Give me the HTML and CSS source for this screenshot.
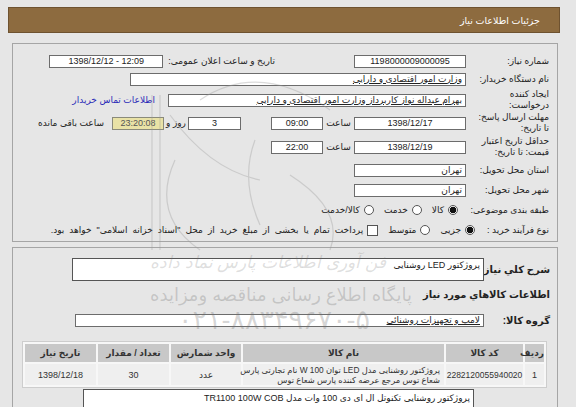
FILE: index.html
```html
<!DOCTYPE html>
<html dir="rtl" lang="fa">
<head>
<meta charset="utf-8">
<link rel="stylesheet" href="styles.css">
</head>
<body>
<div class="page">
  <div class="titlebar">جزئیات اطلاعات نیاز</div>

  <div class="panel p1">
    <div class="row h18">
      <div class="lbl">شماره نیاز:</div>
      <div class="fld w112 c ltr">1198000009000095</div>
      <div class="lbl2">تاریخ و ساعت اعلان عمومی:</div>
      <div class="fld w114 c ltr">1398/12/12 - 12:09</div>
    </div>
    <div class="row h18">
      <div class="lbl">نام دستگاه خریدار:</div>
      <div class="fld w336"><span class="u">وزارت امور اقتصادی و دارایی</span></div>
    </div>
    <div class="row h24">
      <div class="lbl">ایجاد کننده<br>درخواست:</div>
      <div class="fld w298"><span class="u">بهرام عبداله نواز کاربرداز وزارت امور اقتصادی و دارایی</span></div>
      <a class="link">اطلاعات تماس خریدار</a>
    </div>
    <div class="row h22">
      <div class="lbl">مهلت ارسال پاسخ:<br>تا تاریخ:</div>
      <div class="fld w112 c ltr">1398/12/17</div>
      <div class="word w31">ساعت</div>
      <div class="fld w52 c ltr">09:00</div>
      <div class="fld w53 c ltr gap30">3</div>
      <div class="word w24">روز و</div>
      <div class="fld w52 c ltr khaki">23:20:08</div>
      <div class="word gap8">ساعت باقی مانده</div>
    </div>
    <div class="row h26">
      <div class="lbl">حداقل تاریخ اعتبار<br>قیمت: تا تاریخ:</div>
      <div class="fld w112 c ltr">1398/12/19</div>
      <div class="word w31">ساعت</div>
      <div class="fld w52 c ltr">22:00</div>
    </div>
    <div class="row h20">
      <div class="lbl">استان محل تحویل:</div>
      <div class="fld w112">تهران</div>
    </div>
    <div class="row h20">
      <div class="lbl">شهر محل تحویل:</div>
      <div class="fld w112">تهران</div>
    </div>
    <div class="row h20">
      <div class="lbl nowrap">طبقه بندی موضوعی:</div>
      <div class="opts first8">
        <span class="opt"><span class="radio on"></span>کالا</span>
        <span class="opt"><span class="radio"></span>خدمت</span>
        <span class="opt"><span class="radio"></span>کالا/خدمت</span>
      </div>
    </div>
    <div class="row h20">
      <div class="lbl lbl-short nowrap">نوع فرآیند خرید :</div>
      <div class="opts">
        <span class="opt"><span class="radio on"></span>جزیی</span>
        <span class="opt"><span class="radio"></span>متوسط</span>
        <span class="opt wide"><span class="check"></span>پرداخت تمام یا بخشی از مبلغ خرید از محل "اسناد خزانه اسلامی" خواهد بود.</span>
      </div>
    </div>
  </div>

  <div class="panel p2">
    <div class="row2 desc-row">
      <div class="blbl">شرح کلي نياز:</div>
      <div class="box w412">پروژکتور LED روشنایی</div>
    </div>
    <div class="sect">اطلاعات کالاهاي مورد نياز</div>
    <div class="row2 grp-row">
      <div class="blbl">گروه کالا:</div>
      <div class="fld w409"><span class="u">لامپ و تجهیزات روشنائی</span></div>
    </div>
    <table class="tbl">
      <colgroup>
        <col class="c1"><col class="c2"><col class="c3"><col class="c4"><col class="c5"><col class="c6">
      </colgroup>
      <thead>
        <tr><th>ردیف</th><th>کد کالا</th><th>نام کالا</th><th>واحد شمارش</th><th>تعداد / مقدار</th><th>تاریخ نیاز</th></tr>
      </thead>
      <tbody>
        <tr>
          <td>1</td>
          <td class="code">2282120055940020</td>
          <td class="name">پروژکتور روشنایی مدل LED توان 100 W نام تجارتی پارس<br>شعاع توس مرجع عرضه کننده پارس شعاع توس</td>
          <td>عدد</td>
          <td>30</td>
          <td>1398/12/18</td>
        </tr>
      </tbody>
    </table>
    <div class="box w391 note">پروژکتور روشنایی تکنوتل ال ای دی 100 وات مدل TR1100 100W COB</div>
  </div>
</div>

<div class="wm" aria-hidden="true">
  <svg class="wm-logo" width="576" height="407" viewBox="0 0 576 407">
    <g fill="none" stroke="#9a9a9a" stroke-width="1.2">
      <path d="M152 95 L152 250"/>
      <path d="M160 95 L160 250"/>
      <path d="M200 100 Q 260 60 330 110"/>
      <path d="M175 160 Q 150 215 200 250"/>
      <path d="M255 140 Q 240 180 260 225"/>
      <path d="M290 175 Q 345 210 330 250"/>
      <path d="M170 115 Q 210 170 260 180"/>
    </g>
  </svg>
  <div class="wm-fa1">فن آوری اطلاعات پارس نماد داده</div>
  <div class="wm-fa2">پایگاه اطلاع رسانی مناقصه ومزایده</div>
  <div class="wm-tel">۰۲۱-۸۸۳۴۹۶۷۰-۵</div>
</div>
</body>
</html>
```

FILE: styles.css
```css
* { box-sizing: border-box; }
html, body { margin: 0; padding: 0; }
body {
  background: #e6e6e6;
  font-family: "Liberation Sans", "DejaVu Sans", sans-serif;
  font-size: 9px;
  color: #222;
  width: 576px;
  height: 407px;
  overflow: hidden;
  position: relative;
}
.page { padding: 7px 16px 0 8px; height: 407px; overflow: hidden; }
.ltr { direction: ltr; }
.nowrap { white-space: nowrap; }

.titlebar {
  height: 26px;
  background: #8d6b3f;
  border: 1px solid #6e5230;
  color: #fff;
  display: flex;
  align-items: center;
  padding-right: 19px;
  font-size: 9.5px;
}

.panel {
  margin: 10px 2px 0 4px;
  border: 1px solid #a5a5a5;
}
.p1 { padding: 8px 0 1px; }
.p2 { margin-top: 5px; border-bottom: none; }

.row { display: flex; align-items: center; }
.h18 { height: 18px; }
.h20 { height: 20px; }
.h22 { height: 22px; }
.h24 { height: 24px; }
.h26 { height: 26px; }

.lbl {
  width: 91px;
  flex: 0 0 91px;
  padding-right: 8px;
  line-height: 11px;
  color: #222;
}
.lbl-short { width: 82px; flex-basis: 82px; }
.lbl2 {
  margin-right: 79px;
  margin-left: 5px;
  white-space: nowrap;
}

.fld {
  height: 13px;
  background: #fff;
  border: 1px solid #6c6c6c;
  display: flex;
  align-items: center;
  padding: 0 3px;
  white-space: nowrap;
  overflow: hidden;
  line-height: 11px;
  flex: 0 0 auto;
}
.c { justify-content: center; }
.u { text-decoration: underline; }
.w52 { width: 52px; }
.w53 { width: 53px; }
.w112 { width: 112px; }
.w114 { width: 114px; }
.w298 { width: 298px; }
.w336 { width: 336px; }
.w409 { width: 409px; }
.khaki { background: #e9e2a6; color: #555; border-color: #8a8a7a; }

.word { text-align: center; white-space: nowrap; }
.w31 { width: 31px; }
.w24 { width: 24px; }
.gap30 { margin-right: 30px; }
.gap8 { margin-right: 8px; }

.link { color: #2b2bb8; margin-right: 13px; white-space: nowrap; }

.opts { display: flex; align-items: center; }
.first8 { margin-right: 8px; }
.opt {
  display: flex;
  align-items: center;
  gap: 4px;
  margin-left: 10px;
  white-space: nowrap;
}
.opt.wide { word-spacing: 2.5px; }
.radio {
  width: 10px;
  height: 10px;
  border-radius: 50%;
  border: 1px solid #555;
  background: #fff;
  flex: 0 0 10px;
}
.radio.on { background: radial-gradient(circle, #111 0 3px, #fff 3.6px); }
.check {
  width: 11px;
  height: 11px;
  border: 1px solid #555;
  background: #fff;
  flex: 0 0 11px;
}

.row2 { display: flex; align-items: center; }
.blbl {
  width: 73px;
  flex: 0 0 73px;
  padding-right: 7px;
  font-weight: bold;
  font-size: 10px;
  white-space: nowrap;
}
.desc-row { margin-top: 10px; }
.box {
  background: #fff;
  border: 1px solid #555;
  padding: 1px 3px;
  line-height: 11px;
}
.w412 { width: 412px; height: 23px; }
.sect {
  margin-top: 8px;
  padding-right: 7px;
  font-weight: bold;
  font-size: 10px;
  line-height: 12px;
}
.grp-row { margin-top: 13px; }

.tbl {
  margin: 14px 10px 0 9px;
  width: 525px;
  table-layout: fixed;
  border-collapse: separate;
  border-spacing: 2px;
  background: #f7f7f7;
  border: 1px solid #cdcdcd;
  font-size: 9px;
}
.c1 { width: 19px; }
.c2 { width: 77px; }
.c3 { width: 201px; }
.c4 { width: 70px; }
.c5 { width: 71px; }
.c6 { width: 71px; }
.tbl th {
  background: #c8c8c8;
  height: 18px;
  padding: 0;
  font-weight: bold;
  color: #333;
}
.tbl td {
  background: #efefef;
  height: 21px;
  padding: 0 2px;
  text-align: center;
  line-height: 10px;
  color: #333;
}
.tbl td.code { padding: 0; font-size: 8.5px; white-space: nowrap; }
.tbl td.name {
  text-align: right;
  padding-right: 4px;
  padding-left: 1px;
  white-space: nowrap;
  font-size: 8.3px;
}

.w391 { width: 391px; height: 18px; border-bottom: none; }
.note { margin: 1px 83px 0 0; padding-top: 3px; }

.wm {
  position: absolute;
  inset: 0;
  pointer-events: none;
}
.wm-logo { position: absolute; left: 0; top: 0; opacity: 0.35; }
.wm-fa1 {
  position: absolute;
  left: 150px;
  top: 252px;
  font-size: 17px;
  font-style: italic;
  color: rgba(110, 110, 110, 0.22);
  white-space: nowrap;
}
.wm-fa2 {
  position: absolute;
  left: 150px;
  top: 284px;
  font-size: 18px;
  color: rgba(110, 110, 110, 0.28);
  white-space: nowrap;
}
.wm-tel {
  position: absolute;
  left: 178px;
  top: 304px;
  font-size: 27px;
  color: rgba(110, 110, 110, 0.28);
  white-space: nowrap;
}
```
